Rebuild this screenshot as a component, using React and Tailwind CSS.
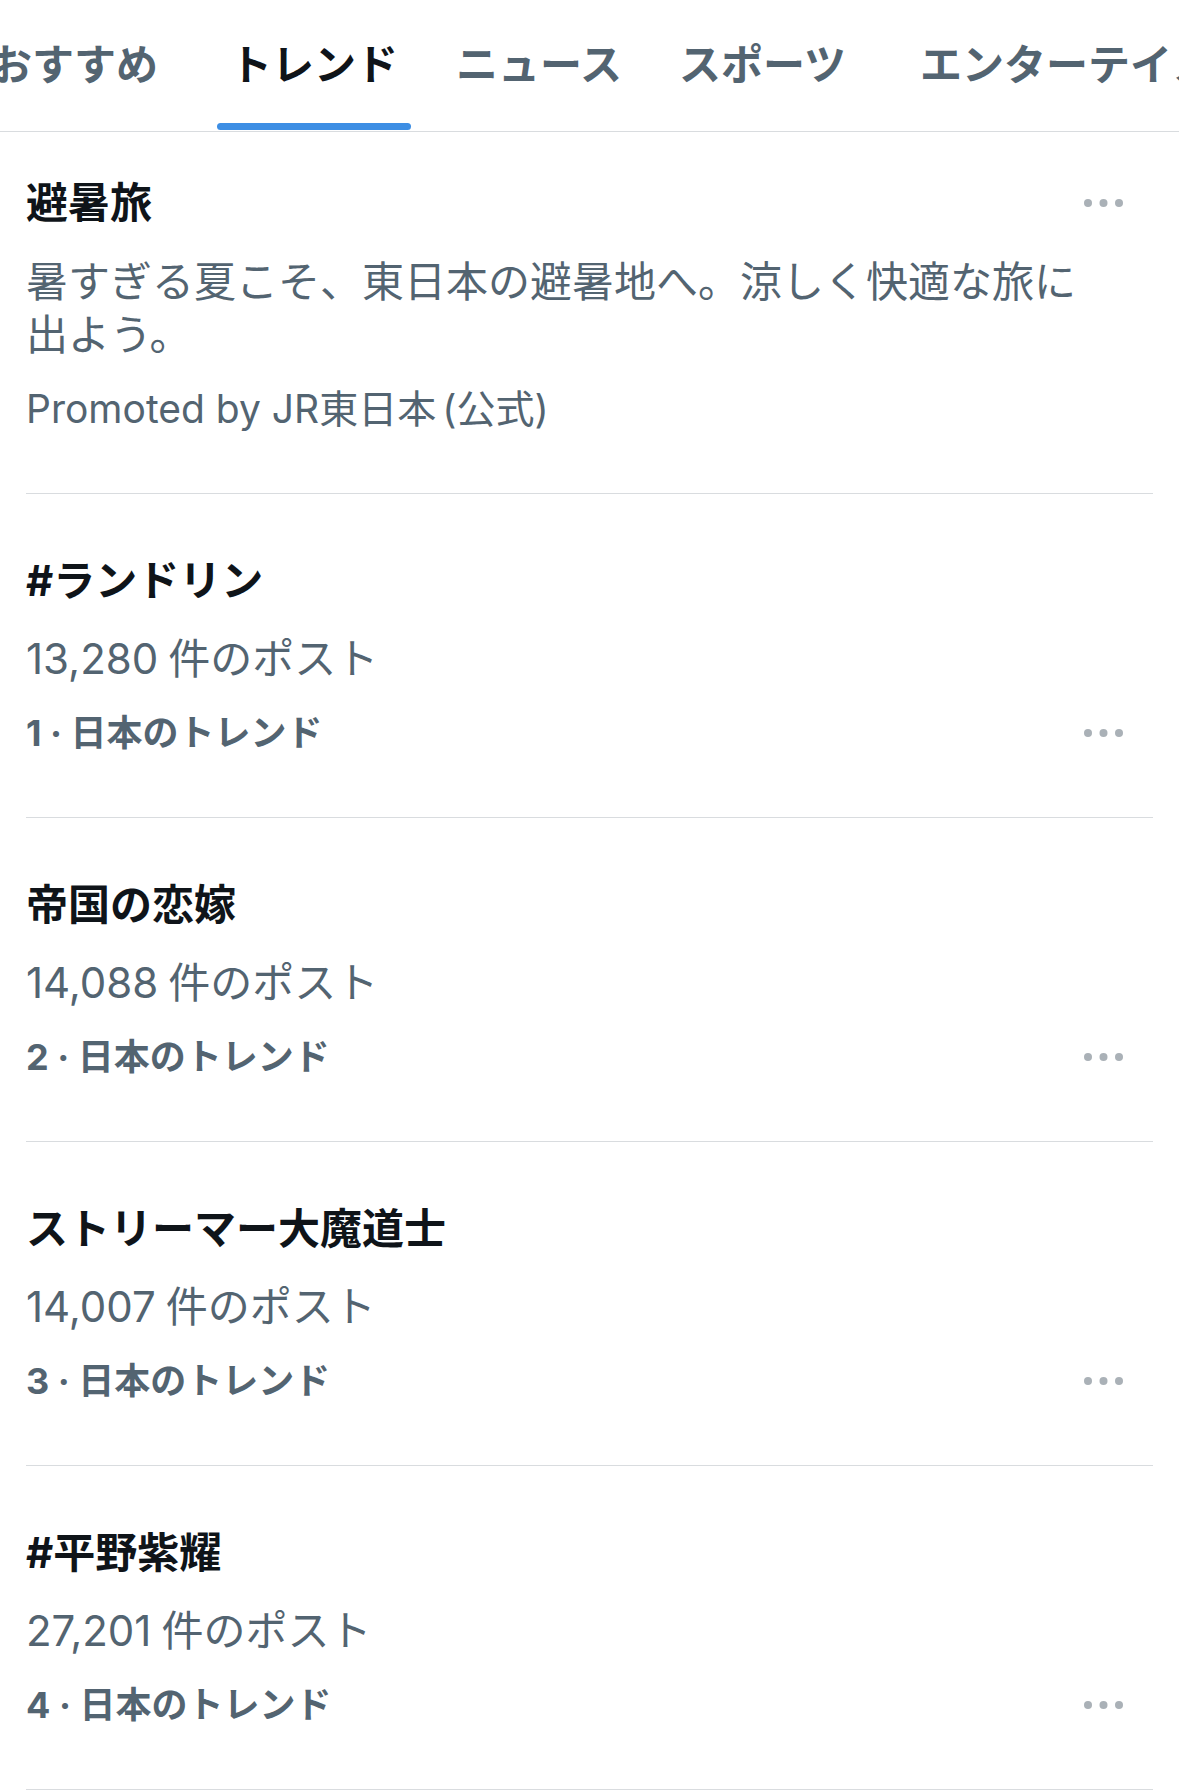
import React from 'react';

const TABS = [
  { label: 'おすすめ', gap: '-ml-[23px]' },
  { label: 'トレンド', gap: 'ml-[46px]', active: true },
  { label: 'ニュース', gap: 'ml-[32px]' },
  { label: 'スポーツ', gap: 'ml-[31px]' },
  { label: 'エンターテイメント', gap: 'ml-[48px]' },
];

const TRENDS = [
  { rank: 1, title: '#ランドリン', posts: '13,280' },
  { rank: 2, title: '帝国の恋嫁', posts: '14,088' },
  { rank: 3, title: 'ストリーマー大魔道士', posts: '14,007' },
  { rank: 4, title: '#平野紫耀', posts: '27,201' },
];

function MoreDots() {
  return (
    <svg width="39" height="8" viewBox="0 0 39 8" className="shrink-0 mr-[30px]">
      <circle cx="4" cy="4" r="4" fill="#aab1b7" />
      <circle cx="19.5" cy="4" r="4" fill="#aab1b7" />
      <circle cx="35" cy="4" r="4" fill="#aab1b7" />
    </svg>
  );
}

export default function App() {
  return (
    <div className="w-[1179px] min-h-[1791px] bg-white overflow-hidden font-[family-name:Inter,'Noto_Sans_CJK_JP',sans-serif] text-[#0f1419]">
      {/* Tabs */}
      <div className="flex h-[132px] border-b border-[#d9dcdf] whitespace-nowrap">
        {TABS.map(tab => (
          <div key={tab.label} className={`flex flex-col justify-between shrink-0 ${tab.gap}`}>
            <span className={`px-[13px] pt-[39px] text-[42px] leading-[52px] font-bold ${tab.active ? 'text-[#0f1419]' : 'text-[#536471]'}`}>
              {tab.label}
            </span>
            <div className={`h-[7px] mb-[1px] rounded-full ${tab.active ? 'bg-[#3d8ee4]' : 'bg-transparent'}`} />
          </div>
        ))}
      </div>

      <div className="mx-[26px]">
        {/* Promoted */}
        <div className="pt-[41px] pb-[58px] border-b border-[#d9dcdf]">
          <div className="flex items-center justify-between">
            <div className="text-[42px] leading-[60px] font-bold">避暑旅</div>
            <MoreDots />
          </div>
          <p className="mt-[22px] pr-[69px] text-[42px] leading-[53px] text-[#536471]">
            暑すぎる夏こそ、東日本の避暑地へ。涼しく快適な旅に出よう。
          </p>
          <p className="mt-[21px] text-[39px] leading-[53px] text-[#536471]">
            Promoted by JR東日本<span className="ml-[6px]">(公式)</span>
          </p>
        </div>

        {/* Trends */}
        {TRENDS.map(t => (
          <div key={t.rank} className="pt-[57px] pb-[59px] border-b border-[#d9dcdf]">
            <div className="text-[42px] leading-[60px] font-bold">{t.title}</div>
            <div className="mt-[18px] text-[42px] leading-[60px] text-[#536471]">
              <span className="mr-[10px]">{t.posts}</span>件のポスト
            </div>
            <div className="mt-[19px] flex items-center justify-between">
              <span className="text-[36px] leading-[50px] font-bold text-[#536471]">{t.rank} · 日本のトレンド</span>
              <MoreDots />
            </div>
          </div>
        ))}
      </div>
    </div>
  );
}
